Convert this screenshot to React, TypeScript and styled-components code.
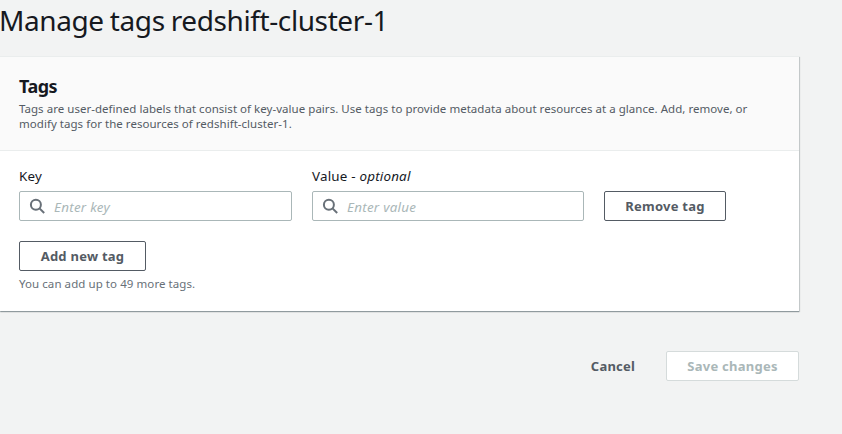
import React from "react";
import styled, { createGlobalStyle } from "styled-components";

const GlobalStyle = createGlobalStyle`
  *, *::before, *::after { box-sizing: border-box; }
  html, body { margin: 0; height: 100%; overflow: hidden; background: #f2f3f3; }
  body { font-family: "Noto Sans", "Open Sans", sans-serif; color: #16191f; }
  h1, h2, p { margin: 0; }
`;

const Page = styled.main`
  width: 799px;
  display: flex;
  flex-direction: column;
`;

const Title = styled.h1`
  height: 56px;
  font-size: 28px;
  font-weight: 400;
  line-height: 41px;
  letter-spacing: -0.4px;
  word-spacing: -0.8px;
  text-indent: -1px;
  white-space: nowrap;
`;

const Panel = styled.section`
  height: 255px;
  background: #fff;
  border-top: 1px solid #eaeded;
  box-shadow: 0 1px 1px 0 rgba(0, 28, 36, 0.3), 1px 1px 1px 0 rgba(0, 28, 36, 0.15);
`;

const PanelHeader = styled.header`
  height: 94px;
  padding: 17px 19px 0;
  background: #fafafa;
  border-bottom: 1px solid #eaeded;
`;

const Heading = styled.h2`
  height: 27px;
  font-size: 18px;
  font-weight: 700;
  line-height: 24px;
  letter-spacing: -0.5px;
`;

const Description = styled.p`
  font-size: 11.5px;
  line-height: 15px;
  letter-spacing: 0.035px;
  color: #545b64;
  white-space: nowrap;
`;

const PanelBody = styled.div`
  padding: 15px 19px 0;
`;

const TagRow = styled.div`
  display: grid;
  grid-template-columns: 273px 272px 122px;
  column-gap: 20px;
  align-items: end;
  margin-bottom: 20px;
`;

const Label = styled.label`
  display: block;
  height: 25px;
  font-size: 13.4px;
  line-height: 20px;
  letter-spacing: 0.2px;
  white-space: nowrap;
`;

const InputFrame = styled.div`
  display: flex;
  align-items: center;
  height: 30px;
  padding: 0 9px;
  gap: 8px;
  background: #fff;
  border: 1px solid #aab7b8;
  border-radius: 2px;
`;

const Input = styled.input`
  flex: 1;
  min-width: 0;
  height: 28px;
  padding: 2px 0 0;
  border: 0;
  outline: 0;
  background: transparent;
  font: 400 13.4px "Noto Sans", sans-serif;
  letter-spacing: 0.27px;
  color: #16191f;
  &::placeholder { color: #aab7b8; font-style: italic; opacity: 1; }
`;

const Button = styled.button<{ $width: number; $variant?: "normal" | "link" }>`
  display: block;
  width: ${(p) => p.$width}px;
  height: 30px;
  padding: 0;
  border: 1px solid ${(p) => (p.$variant === "link" ? "transparent" : "#545b64")};
  border-radius: 2px;
  background: ${(p) => (p.$variant === "link" ? "transparent" : "#fff")};
  color: #545b64;
  font: 700 13px/20px "Noto Sans", sans-serif;
  letter-spacing: 0.25px;
  white-space: nowrap;
  &:disabled { color: #aab7b8; border-color: #d5dbdb; }
`;

const Hint = styled.p`
  margin-top: 5px;
  font-size: 11.5px;
  line-height: 16px;
  letter-spacing: 0.07px;
  color: #687078;
`;

const Actions = styled.footer`
  display: flex;
  justify-content: flex-end;
  gap: 10px;
  margin-top: 40px;
`;

const SearchIcon = () => (
  <svg width="17" height="17" viewBox="0 0 17 17" fill="none" stroke="#687078" strokeWidth="2">
    <circle cx="6.9" cy="6.8" r="5" />
    <path d="M10.5 10.4 L15.2 15" />
  </svg>
);

interface FieldProps {
  id: string;
  label: React.ReactNode;
  placeholder: string;
}

const Field = ({ id, label, placeholder }: FieldProps) => (
  <div>
    <Label htmlFor={id}>{label}</Label>
    <InputFrame>
      <SearchIcon />
      <Input id={id} placeholder={placeholder} />
    </InputFrame>
  </div>
);

export default function App() {
  return (
    <>
      <GlobalStyle />
      <Page>
        <Title>Manage tags redshift-cluster-1</Title>
        <Panel>
          <PanelHeader>
            <Heading>Tags</Heading>
            <Description>
              Tags are user-defined labels that consist of key-value pairs. Use tags to provide metadata about resources at a glance. Add, remove, or
              <br />
              modify tags for the resources of redshift-cluster-1.
            </Description>
          </PanelHeader>
          <PanelBody>
            <TagRow>
              <Field id="tag-key" label="Key" placeholder="Enter key" />
              <Field id="tag-value" label={<>Value - <em>optional</em></>} placeholder="Enter value" />
              <Button $width={122}>Remove tag</Button>
            </TagRow>
            <Button $width={127}>Add new tag</Button>
            <Hint>You can add up to 49 more tags.</Hint>
          </PanelBody>
        </Panel>
        <Actions>
          <Button $width={86} $variant="link">Cancel</Button>
          <Button $width={133} disabled>Save changes</Button>
        </Actions>
      </Page>
    </>
  );
}
